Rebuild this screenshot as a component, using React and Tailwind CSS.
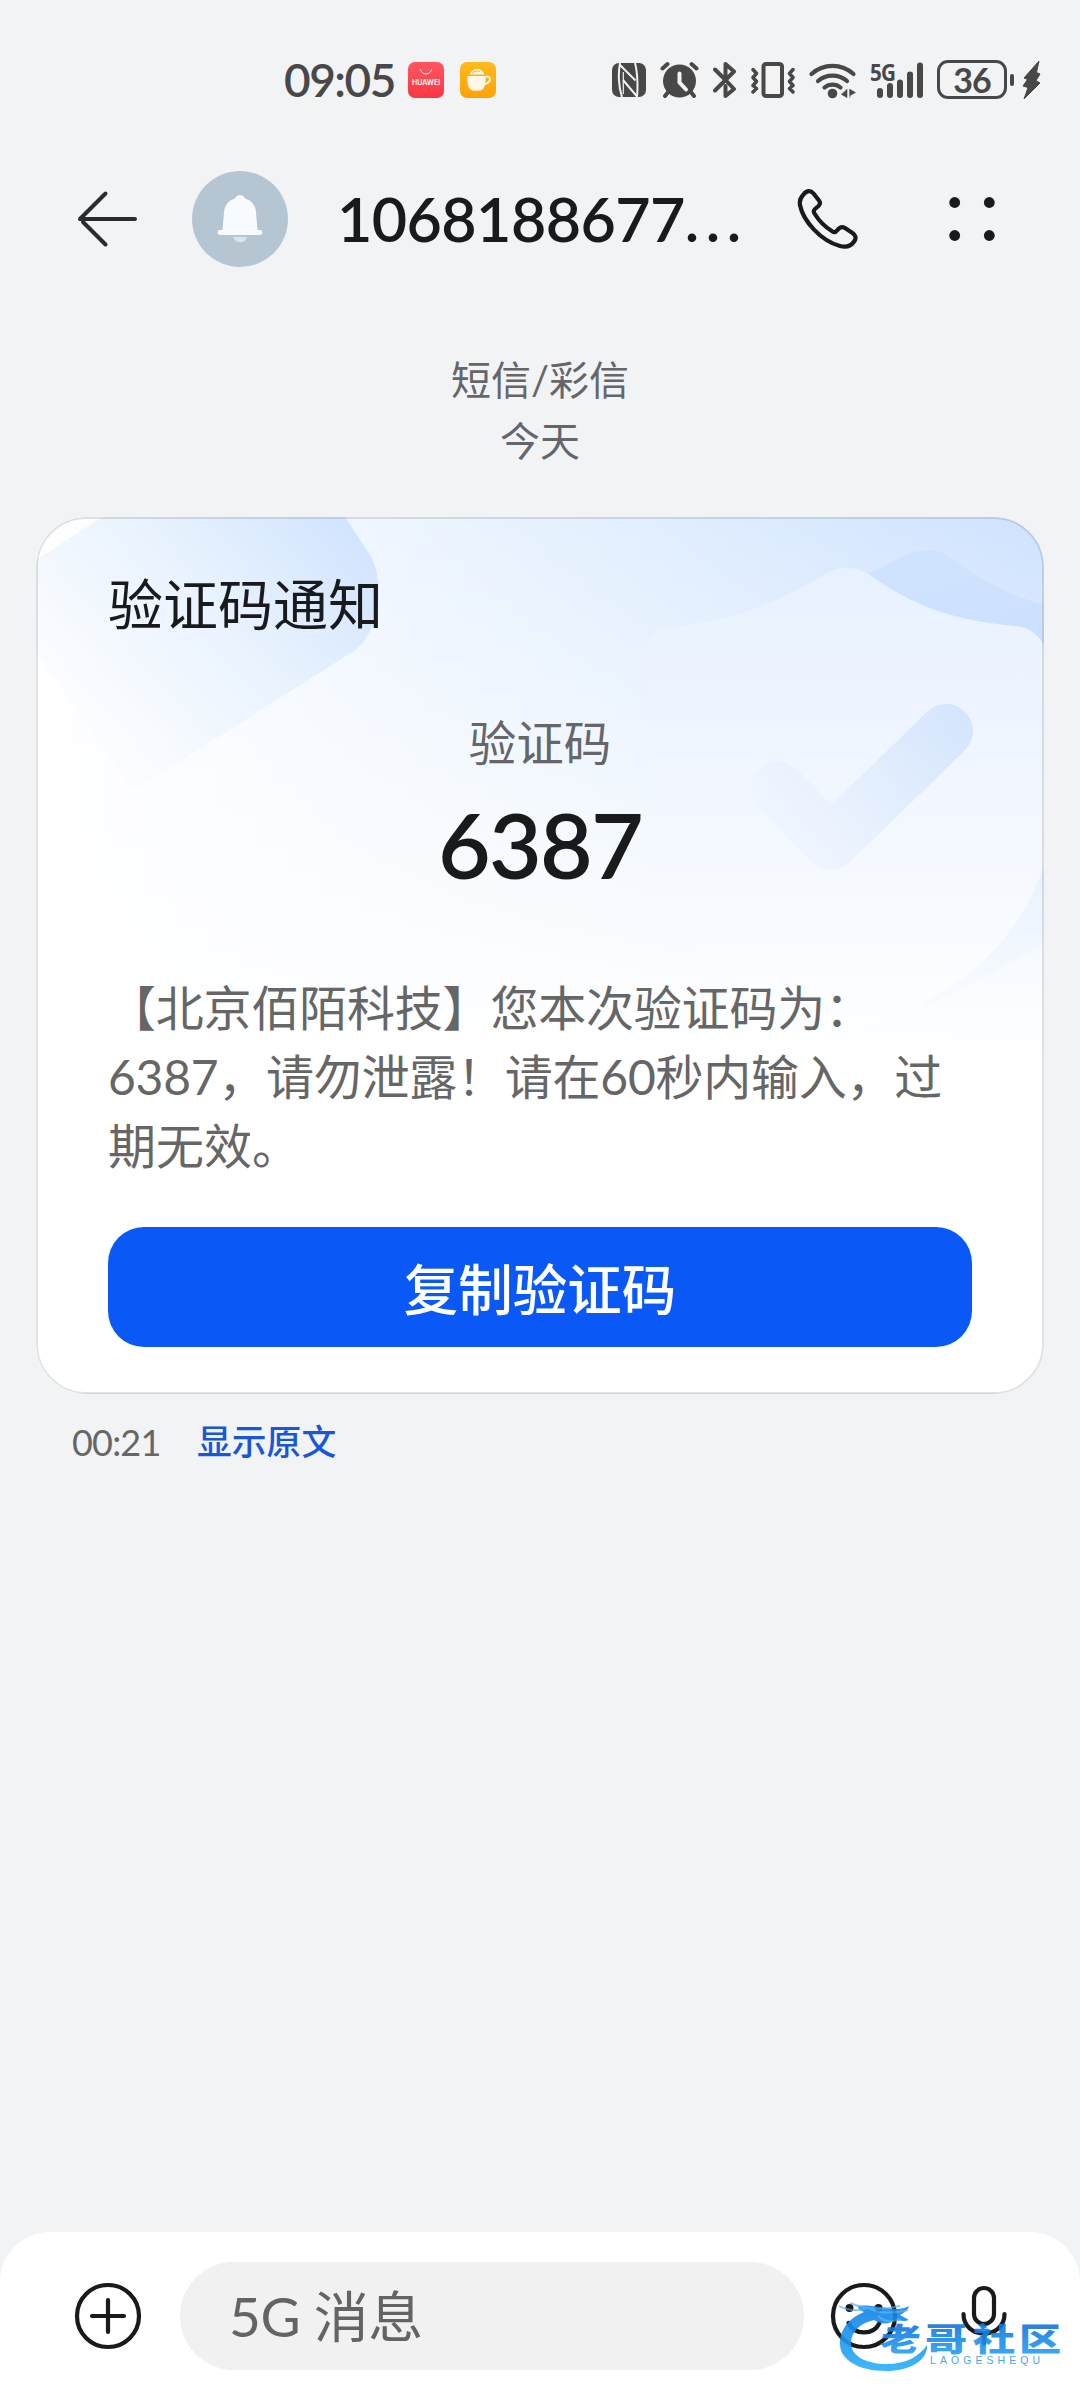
const STATUS = '#484848';

function StatusBar() {
  return (
    <div className="flex h-[159px] items-center justify-between pl-[284px] pr-[39px] text-[#484848]">
      <div className="flex items-center">
        <span className="w-[124px] text-[46px] leading-none font-semibold tracking-[-1.500px]">09:05</span>
        <span className="flex size-9 flex-col items-center rounded-[7px] bg-linear-to-b from-[#ff5560] to-[#f93643] pt-1.5 text-white">
          <svg width="14" height="8" viewBox="0 0 14 8" fill="none" stroke="#fff" strokeWidth="1">
            <path d="M1.5 1a5.5 5 0 0 0 11 0" />
          </svg>
          <span className="mt-[2px] font-['Inter'] text-[7px] leading-[9px] font-semibold">HUAWEI</span>
        </span>
        <svg className="ml-4" width="36" height="36" viewBox="0 0 36 36">
          <defs>
            <linearGradient id="cupBg" x1="0" y1="0" x2="0" y2="1">
              <stop offset="0" stopColor="#fdbb1e" />
              <stop offset="1" stopColor="#fea204" />
            </linearGradient>
          </defs>
          <rect width="36" height="36" rx="7" fill="url(#cupBg)" />
          <path d="M7.5 14h18v5c0 6-3 9.800-6.500 9.800h-5c-4 0-6.500-4-6.500-9.800z" fill="#fff8e6" />
          <path d="M9.500 12.500c1.500-3.500 4-5.500 7.500-5.500s6.500 2 7.500 5.500z" fill="#fff8e6" />
          <path d="M12 11.500c2-2.500 5-2.800 8-2.200" fill="none" stroke="#fdb21a" strokeWidth="1" />
          <path d="M25 15.500c3-2 5.500-.5 5 2s-3 4-5.500 4.500" fill="none" stroke="#fff8e6" strokeWidth="2" />
        </svg>
      </div>

      <div className="flex items-center">
        <svg width="34" height="34" viewBox="0 0 34 34">
          <rect width="34" height="34" rx="7" fill={STATUS} />
          <path d="M8 0C6 10 6.500 24 10 34M8 2l15.500 15.500M23 0c2.500 9 3 24 2 33.500L11 17" fill="none" stroke="#f1f3f5" strokeWidth="2" />
          <path d="M11.300 9v22" fill="none" stroke="#f1f3f5" strokeWidth="1.200" />
        </svg>
        <svg className="ml-3.5" width="39" height="38" viewBox="0 0 39 38" fill="none" stroke={STATUS} strokeLinecap="round">
          <circle cx="19.500" cy="20" r="16.500" fill={STATUS} stroke="none" />
          <path d="M2.500 7.500 7.500 3M36.500 7.500 31.500 3M9 30l-4 5M30 30l4 5" strokeWidth="4" />
          <path d="M19.500 12.500v9l6.500 7" stroke="#f1f3f5" strokeWidth="4" />
        </svg>
        <svg className="ml-[14px]" width="24" height="38" viewBox="0 0 24 38" fill="none" stroke={STATUS} strokeWidth="4" strokeLinecap="round" strokeLinejoin="round">
          <path d="M2 8.500 12.500 19 2 29.500M12.500 14V3L21 10.500 12.500 19M12.500 25v10l8.500-7-8.500-9" />
        </svg>
        <svg className="ml-[13px]" width="46" height="38" viewBox="0 0 46 38" fill="none" stroke={STATUS} strokeWidth="4" strokeLinecap="round" strokeLinejoin="round">
          <rect x="13.500" y="3" width="18.500" height="32" rx="2.500" />
          <path d="M3 8.500l3.500 4-3.500 4 3.500 4-3.500 4 3.500 3L3 31M43 8.500l-3.500 4 3.500 4-3.500 4 3.500 4-3.500 3L43 31" strokeWidth="3.500" />
        </svg>
        <svg className="ml-3" width="50" height="38" viewBox="0 0 50 38" fill="none" stroke={STATUS} strokeWidth="4.200" strokeLinecap="round">
          <path d="M3.500 13a31 31 0 0 1 42 0M10 20a22 22 0 0 1 29 0M16.500 26.500a12.500 12.500 0 0 1 16 0" />
          <circle cx="24.500" cy="32.500" r="4.800" fill={STATUS} stroke="none" />
          <path d="M39 28.500v8l-5.500-3zM42 28.500v8M42 28.500l5.500 3-5.500 3z" fill={STATUS} strokeWidth="0.600" />
        </svg>
        <div className="relative ml-[12px] h-[38px] w-[54px]">
          <span className="absolute top-[-1px] left-0 font-['Open_Sans'] text-[24px] leading-[24px] font-bold tracking-[-1px]">
            <span className="inline-block origin-left scale-x-[0.860]">5G</span>
          </span>
          <svg width="54" height="38" viewBox="0 0 54 38" stroke={STATUS} strokeWidth="6" strokeLinecap="round">
            <path d="M10 30v4M20 25v9M30 21.500v12.500M40 13.500v20.500M50 4.500v29.500" />
          </svg>
        </div>
        <div className="ml-[13px] flex h-[39px] w-[70px] items-center justify-center rounded-[11px] border-[3px] border-[#484848] text-[34px] leading-none font-bold tracking-[-1px]">
          36
        </div>
        <span className="ml-[3px] h-3 w-[4px] rounded-full bg-[#484848]" />
        <svg className="ml-[8px]" width="19" height="40" viewBox="0 0 19 40" fill={STATUS} stroke={STATUS} strokeWidth="1" strokeLinejoin="round">
          <path d="M17 1 2 18l3.500 1.500L1 26l5 1.500L2 39 18 23l-4-2.500 4-6.500-3.500-1.500z" />
        </svg>
      </div>
    </div>
  );
}

function ChatHeader() {
  return (
    <header className="flex h-[120px] items-center pl-[75px] pr-[85px]">
      <svg width="64" height="60" viewBox="0 0 64 60" fill="none" stroke="#2a2c2e" strokeWidth="4" strokeLinecap="round" strokeLinejoin="round">
        <path d="M30.500 4.500 5 30h55M30.500 55.500 8 33" />
      </svg>
      <span className="ml-[53px] flex size-24 items-center justify-center rounded-full bg-[#b6c5d2]">
        <svg width="48" height="50" viewBox="0 0 48 50">
          <path d="M24 1c2.500 0 4 1.500 5 3.500 7 2 10.500 7 11 14L41.500 36H44a2.500 2.500 0 0 1 0 5H4a2.500 2.500 0 0 1 0-5h2.500L8 18.500c.5-7 4-12 11-14C20 2.500 21.500 1 24 1z" fill="#f8fbfd" />
          <path d="M17.500 43h13.500a6.800 6 0 0 1-13.500 0z" fill="#dbe4ec" />
        </svg>
      </span>
      <h1 className="ml-[49px] w-[420px] text-[61px] leading-[80px] font-semibold tracking-[-0.600px] whitespace-nowrap text-[#191a1b]">
        1068188677<span className="tracking-[6.500px]">...</span>
      </h1>
      <svg className="ml-[40px]" width="62" height="62" viewBox="0 0 62 62" fill="none" stroke="#191a1b" strokeWidth="4.200" strokeLinejoin="round">
        <path d="M6.500 6.500C10 2 14 2.500 16.500 5.500L22 12.500c1.500 2 1 4-.5 5.500l-3.500 3c-1.500 1.500-1.500 3-.5 4.500C22 33 29 39.500 35.500 43.500c2 1.300 3.500.5 5-1.500 2.500-3.200 5-3.500 7.500-2l7.500 5c3 2 4 5 2 8-3.500 5.500-9 6.500-14.500 5C24 53 6 33 3 17c-.7-4 .5-7.500 3.500-10.500z" />
      </svg>
      <svg className="ml-auto" width="46" height="44" viewBox="0 0 46 44" fill="#191a1b">
        <circle cx="5.700" cy="5.500" r="5.400" />
        <circle cx="40.300" cy="5.500" r="5.400" />
        <circle cx="5.700" cy="38.500" r="5.400" />
        <circle cx="40.300" cy="38.500" r="5.400" />
      </svg>
    </header>
  );
}

function CardBackdrop() {
  return (
    <svg className="absolute inset-0" width="1008" height="876" viewBox="36 517 1008 876" fill="none">
      <defs>
        <linearGradient id="sky" x1="36" y1="0" x2="1044" y2="0" gradientUnits="userSpaceOnUse">
          <stop offset="0" stopColor="#fff" />
          <stop offset="0.300" stopColor="#f0f6ff" />
          <stop offset="0.550" stopColor="#e4f0fe" />
          <stop offset="1" stopColor="#cfe2fe" />
        </linearGradient>
        <linearGradient id="fade" x1="0" y1="517" x2="0" y2="1060" gradientUnits="userSpaceOnUse">
          <stop offset="0" stopColor="#fff" stopOpacity="0" />
          <stop offset="0.500" stopColor="#fff" stopOpacity="0.550" />
          <stop offset="1" stopColor="#fff" />
        </linearGradient>
        <linearGradient id="tile" x1="375" y1="540" x2="130" y2="760" gradientUnits="userSpaceOnUse">
          <stop offset="0" stopColor="#d1e3fe" />
          <stop offset="0.500" stopColor="#e9f3fe" />
          <stop offset="1" stopColor="#fbfcff" />
        </linearGradient>
        <linearGradient id="backShield" x1="0" y1="550" x2="0" y2="1020" gradientUnits="userSpaceOnUse">
          <stop offset="0" stopColor="#c9dffe" stopOpacity="0.500" />
          <stop offset="0.200" stopColor="#c9dffe" stopOpacity="0.900" />
          <stop offset="1" stopColor="#f8fbff" stopOpacity="0.500" />
        </linearGradient>
        <linearGradient id="frontShield" x1="0" y1="568" x2="0" y2="1020" gradientUnits="userSpaceOnUse">
          <stop offset="0" stopColor="#e7f2fe" />
          <stop offset="0.250" stopColor="#edf4ff" />
          <stop offset="0.650" stopColor="#f5f9ff" />
          <stop offset="1" stopColor="#fdfeff" />
        </linearGradient>
        <linearGradient id="tick" x1="965" y1="710" x2="800" y2="860" gradientUnits="userSpaceOnUse">
          <stop offset="0" stopColor="#d4e5fd" />
          <stop offset="0.750" stopColor="#eaf2fe" />
          <stop offset="1" stopColor="#f0f6ff" />
        </linearGradient>
      </defs>
      <rect x="36" y="517" width="1008" height="876" fill="#fff" />
      <rect x="36" y="517" width="1008" height="876" fill="url(#sky)" />
      <rect x="36" y="517" width="1008" height="876" fill="url(#fade)" />
      <path d="M36 560 102 517H345L370 555C386 583 380 632 354 651L133 791 36 652z" fill="url(#tile)" />
      <path d="M868 573C890 566 904 550 927 550C945 550 950 558 968 570C990 584 1015 597 1044 605V943C1005 967 965 988 925 1007L850 700z" fill="url(#backShield)" />
      <path d="M827 573Q846 563 867 573C910 605 955 621 1015 626Q1033 627 1044 645V865C1020 940 960 1000 846 1035C735 1000 645 930 645 830V655Q646 630 672 627C735 620 780 602 827 573z" fill="url(#frontShield)" />
      <path d="M778 789 831 843 946 731" stroke="url(#tick)" strokeWidth="54" strokeLinecap="round" strokeLinejoin="round" />
    </svg>
  );
}

function CodeCard() {
  return (
    <section className="relative mx-9 mt-[45px] h-[877px] overflow-hidden rounded-[50px]">
      <CardBackdrop />
      <div className="relative flex h-full flex-col rounded-[50px] border-2 border-[#646e78]/20 px-[70px]">
        <h2 className="mt-[47px] text-[55px] leading-[76px] text-[#191a1b]">验证码通知</h2>
        <p className="mt-[68px] text-center text-[47.500px] leading-[66px] text-[#64666a]">验证码</p>
        <p className="mt-[18px] text-center text-[91px] leading-[100px] font-semibold tracking-[-1.800px] text-[#191a1b]">6387</p>
        <p className="mt-[79px] text-[48px] leading-[69px] text-[#666]">
          <span className="tracking-[-0.200px]">【北京佰陌科技】您本次验证码为：</span>
          <br />
          <span className="tracking-[-0.250px]">6387，请勿泄露！请在60秒内输入，过</span>
          <br />
          期无效。
        </p>
        <button className="mt-[47px] h-[120px] w-full shrink-0 rounded-[36px] bg-[#0a59f7] pt-[3px] text-[54.500px] leading-[80px] font-medium text-white">
          复制验证码
        </button>
      </div>
    </section>
  );
}

function Watermark() {
  return (
    <svg className="absolute top-[60px] left-[834px] opacity-90" width="236" height="86" viewBox="834 2292 236 86">
      <defs>
        <linearGradient id="brand" x1="0" y1="2300" x2="0" y2="2370" gradientUnits="userSpaceOnUse">
          <stop offset="0" stopColor="#1080e4" />
          <stop offset="0.450" stopColor="#1a90ec" />
          <stop offset="1" stopColor="#2bb0fa" />
        </linearGradient>
        <linearGradient id="brandText" x1="0" y1="0" x2="0" y2="1">
          <stop offset="0.200" stopColor="#0f74dc" />
          <stop offset="1" stopColor="#29a8f8" />
        </linearGradient>
      </defs>
      <path d="M858 2306C866 2304 884 2308 896 2309C903 2309 907 2307 909 2306C908 2310 904 2313 900 2315L909 2320C904 2322 898 2320 894 2320C890 2325 880 2324 874 2320C860 2323 851 2332 851 2343C851 2356 866 2364 887 2364C906 2364 920 2356 927 2345C928 2361 909 2371 886 2371C859 2371 840 2360 840 2344C840 2328 850 2318 864 2312C860 2311 858 2309 858 2306z" fill="url(#brand)" />
      <path d="M839 2306c9 5 17 5 27 3M850 2303c14 6 30 8 50 3M868 2308c12 6 28 5 40 2M878 2316c8 7 14 6 22 3" fill="none" stroke="#4aaef4" strokeWidth="2" opacity="0.700" />
      <g fill="url(#brandText)" className="font-['Noto_Sans_CJK_SC',sans-serif] font-black">
        <text transform="translate(879 2351) skewX(-8) scale(1.240 1)" fontSize="32">老</text>
        <text transform="translate(925 2351) scale(1.320 1)" fontSize="32">哥</text>
        <text transform="translate(973 2351) scale(1.320 1)" fontSize="32">社</text>
        <text transform="translate(1019 2351) scale(1.320 1)" fontSize="32">区</text>
      </g>
      <text x="930" y="2364" fontSize="10.500" textLength="110" fill="#3a9be8" className="font-['Liberation_Sans',sans-serif]">LAOGESHEQU</text>
    </svg>
  );
}

function Composer() {
  return (
    <footer className="relative mt-auto flex h-[168px] items-start rounded-t-[50px] bg-white pt-[30px] pl-[74px]">
      <svg className="mt-5" width="68" height="68" viewBox="0 0 68 68" fill="none" stroke="#191a1b" strokeWidth="4.200" strokeLinecap="round">
        <circle cx="34" cy="34" r="31" />
        <path d="M34 18v32M18 34h32" />
      </svg>
      <div className="ml-[38px] flex h-[108px] w-[624px] items-center rounded-full bg-[#f1f1f1] pl-[49px] text-[55px] leading-none tracking-[-0.500px] text-[#646464]">
        5G 消息
      </div>
      <svg className="mt-5 ml-[26px]" width="68" height="68" viewBox="0 0 68 68" fill="none" stroke="#191a1b" strokeWidth="4.200" strokeLinecap="round">
        <circle cx="34" cy="34" r="31" />
        <circle cx="19.500" cy="26" r="4" fill="#191a1b" stroke="none" />
        <circle cx="48.500" cy="26" r="4" fill="#191a1b" stroke="none" />
        <path d="M18.500 41c6 12.500 25 12.500 31 0" />
      </svg>
      <svg className="mt-5 ml-[62px]" width="48" height="68" viewBox="0 0 48 68" fill="none" stroke="#191a1b" strokeWidth="4.200" strokeLinecap="round">
        <rect x="14" y="6" width="20" height="36" rx="10" />
        <path d="M3.500 32c0 26 41 26 41 0M24 51.500v10" />
      </svg>
      <Watermark />
    </footer>
  );
}

export default function App() {
  return (
    <div className="flex h-[2400px] w-[1080px] flex-col overflow-hidden bg-[#f1f3f5] font-['Lato','Noto_Sans_CJK_SC',sans-serif]">
      <StatusBar />
      <ChatHeader />
      <div className="mt-[71px] text-center text-[40px] leading-[61px] text-[#64666a]">
        <p>短信/彩信</p>
        <p>今天</p>
      </div>
      <CodeCard />
      <div className="mt-[22px] flex items-center pl-[72px] text-[36px] leading-[52px]">
        <span className="w-[125px] tracking-[-0.800px] text-[#666]">00:21</span>
        <a className="text-[34.800px] font-medium text-[#1a57d6]">显示原文</a>
      </div>
      <Composer />
    </div>
  );
}
